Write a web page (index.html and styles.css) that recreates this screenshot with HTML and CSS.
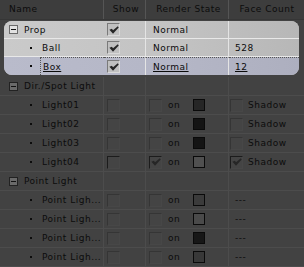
FILE: index.html
```html
<!DOCTYPE html>
<html>
<head>
<meta charset="utf-8">
<link rel="stylesheet" href="styles.css">
</head>
<body>
<div class="tree">
  <div class="row head">
    <div class="c name">Name</div>
    <div class="c show ctr">Show</div>
    <div class="c rs ctr">Render State</div>
    <div class="c fc ctr">Face Count</div>
  </div>

  <div class="sel">
    <div class="row srow">
      <div class="c name grp"><span class="tog"></span><span>Prop</span></div>
      <div class="c show"><span class="cb on"><svg viewBox="0 0 11 9"><path d="M0.3 4.2 L3.2 3 L4.4 4.8 L9.8 0.2 L10.8 1.8 L4.4 8.8 Z"/></svg></span></div>
      <div class="c rs"><span class="txt">Normal</span></div>
      <div class="c fc"></div>
    </div>
    <div class="row srow">
      <div class="c name kid"><span class="dot"></span><span>Ball</span></div>
      <div class="c show"><span class="cb on"><svg viewBox="0 0 11 9"><path d="M0.3 4.2 L3.2 3 L4.4 4.8 L9.8 0.2 L10.8 1.8 L4.4 8.8 Z"/></svg></span></div>
      <div class="c rs"><span class="txt">Normal</span></div>
      <div class="c fc"><span class="txt">528</span></div>
    </div>
    <div class="row srow box">
      <div class="c name kid"><span class="dot"></span><span class="focus u">Box</span></div>
      <div class="c show"><span class="cb on"><svg viewBox="0 0 11 9"><path d="M0.3 4.2 L3.2 3 L4.4 4.8 L9.8 0.2 L10.8 1.8 L4.4 8.8 Z"/></svg></span></div>
      <div class="c rs"><span class="txt u">Normal</span></div>
      <div class="c fc"><span class="txt u">12</span></div>
    </div>
  </div>

  <div class="row">
    <div class="c name grp"><span class="tog"></span><span>Dir./Spot Light</span></div>
    <div class="c show"></div><div class="c rs"></div><div class="c fc"></div>
  </div>
  <div class="row">
    <div class="c name kid"><span class="dot"></span><span>Light01</span></div>
    <div class="c show"><span class="cb"></span></div>
    <div class="c rs"><span class="cb"></span><span class="on-t">on</span><span class="sw" style="background:#262626"></span></div>
    <div class="c fc"><span class="cb"></span><span class="sh">Shadow</span></div>
  </div>
  <div class="row">
    <div class="c name kid"><span class="dot"></span><span>Light02</span></div>
    <div class="c show"><span class="cb"></span></div>
    <div class="c rs"><span class="cb"></span><span class="on-t">on</span><span class="sw" style="background:#141414"></span></div>
    <div class="c fc"><span class="cb"></span><span class="sh">Shadow</span></div>
  </div>
  <div class="row">
    <div class="c name kid"><span class="dot"></span><span>Light03</span></div>
    <div class="c show"><span class="cb"></span></div>
    <div class="c rs"><span class="cb"></span><span class="on-t">on</span><span class="sw" style="background:#141414"></span></div>
    <div class="c fc"><span class="cb"></span><span class="sh">Shadow</span></div>
  </div>
  <div class="row">
    <div class="c name kid"><span class="dot"></span><span>Light04</span></div>
    <div class="c show"><span class="cb dark"></span></div>
    <div class="c rs"><span class="cb on dark"><svg viewBox="0 0 11 9"><path d="M0.3 4.2 L3.2 3 L4.4 4.8 L9.8 0.2 L10.8 1.8 L4.4 8.8 Z"/></svg></span><span class="on-t">on</span><span class="sw" style="background:#505050"></span></div>
    <div class="c fc"><span class="cb on dark"><svg viewBox="0 0 11 9"><path d="M0.3 4.2 L3.2 3 L4.4 4.8 L9.8 0.2 L10.8 1.8 L4.4 8.8 Z"/></svg></span><span class="sh">Shadow</span></div>
  </div>

  <div class="row">
    <div class="c name grp"><span class="tog"></span><span>Point Light</span></div>
    <div class="c show"></div><div class="c rs"></div><div class="c fc"></div>
  </div>
  <div class="row">
    <div class="c name kid"><span class="dot"></span><span>Point Ligh...</span></div>
    <div class="c show"><span class="cb"></span></div>
    <div class="c rs"><span class="cb"></span><span class="on-t">on</span><span class="sw" style="background:#3b3b3b"></span></div>
    <div class="c fc"><span class="txt">---</span></div>
  </div>
  <div class="row">
    <div class="c name kid"><span class="dot"></span><span>Point Ligh...</span></div>
    <div class="c show"><span class="cb"></span></div>
    <div class="c rs"><span class="cb"></span><span class="on-t">on</span><span class="sw" style="background:#4a4a4a"></span></div>
    <div class="c fc"><span class="txt">---</span></div>
  </div>
  <div class="row">
    <div class="c name kid"><span class="dot"></span><span>Point Ligh...</span></div>
    <div class="c show"><span class="cb"></span></div>
    <div class="c rs"><span class="cb"></span><span class="on-t">on</span><span class="sw" style="background:#171717"></span></div>
    <div class="c fc"><span class="txt">---</span></div>
  </div>
  <div class="row">
    <div class="c name kid"><span class="dot"></span><span>Point Ligh...</span></div>
    <div class="c show"><span class="cb"></span></div>
    <div class="c rs"><span class="cb"></span><span class="on-t">on</span><span class="sw" style="background:#383838"></span></div>
    <div class="c fc"><span class="txt">---</span></div>
  </div>
</div>
</body>
</html>
```

FILE: styles.css
```css
html, body {
  margin: 0;
  padding: 0;
  background: #424242;
}
.tree {
  width: 304px;
  height: 267px;
  overflow: hidden;
  font-family: "DejaVu Sans", sans-serif;
  font-size: 9px;
  letter-spacing: 0.5px;
  color: #0c0c0c;
  background: #424242;
}
.row {
  display: grid;
  grid-template-columns: 104px 42px 83px 75px;
  height: 19px;
  box-sizing: border-box;
  border-bottom: 1px solid #4c4c4c;
}
.c {
  display: flex;
  align-items: center;
  box-sizing: border-box;
  border-right: 1px solid #4c4c4c;
  white-space: nowrap;
  overflow: hidden;
}
.c.fc { border-right: none; }
.head {
  height: 20px;
  background: #3d3d3d;
  border-bottom: 1px solid #363636;
}
.head .c { border-right: 1px solid #555; padding-bottom: 1px; }
.head .c.fc { border-right: none; }
.head .name { padding-left: 9px; }
.ctr { justify-content: center; }

/* name column */
.grp { padding-left: 9px; gap: 6px; }
.kid { padding-left: 30px; gap: 10px; }
.tog {
  width: 9px;
  height: 9px;
  box-sizing: border-box;
  border: 1px solid #222;
  background: #6a6a6a;
  position: relative;
  flex: none;
}
.tog::after {
  content: "";
  position: absolute;
  left: 1px;
  right: 1px;
  top: 3px;
  height: 1px;
  background: #111;
}
.dot {
  width: 2px;
  height: 2px;
  background: #0c0c0c;
  flex: none;
}

/* show & render cells */
.show { padding-left: 3px; }
.rs { padding-left: 3px; }
.fc { padding-left: 1px; }
.txt { margin-left: 4px; }
.rs .txt { margin-left: 4px; }
.fc .txt { margin-left: 5px; }
.cb {
  width: 13px;
  height: 13px;
  box-sizing: border-box;
  border-top: 1px solid #353535;
  border-left: 1px solid #353535;
  border-right: 1px solid #474747;
  border-bottom: 1px solid #474747;
  background: #444;
  flex: none;
  display: flex;
  align-items: center;
  justify-content: center;
}
.cb.dark {
  border-top-color: #1c1c1c;
  border-left-color: #1c1c1c;
}
.cb svg { width: 10px; height: 8px; fill: #262626; }
.on-t { margin-left: 6px; }
.sw {
  width: 12px;
  height: 12px;
  box-sizing: border-box;
  border: 1px solid #0a0a0a;
  margin-left: 13px;
  flex: none;
}
.sh { margin-left: 5px; }

/* selection group */
.sel {
  margin: 1px 5px 2px 4px;
  border-radius: 8px;
  overflow: hidden;
  background: #c4c4c4;
}
.srow {
  grid-template-columns: 100px 42px 83px 70px;
  height: 18px;
  border-bottom: 1px solid #e8e8e8;
  background: linear-gradient(to right, #cacaca, #c2c2c2 60%, #b7b7b7);
}
.srow.box {
  border-bottom: none;
  height: 18px;
  background: linear-gradient(to right, #b9bbcb, #b4b6c6 60%, #adafbf);
}
.srow .c { border-right: 1px solid #e4e4e4; }
.srow .c.name { border-right: none; }
.srow .c.fc { border-right: none; }
.srow .grp { padding-left: 5px; }
.srow .kid { padding-left: 26px; }
.srow .tog {
  background: #e2e2e2;
  border-color: #6a6a6a;
}
.srow .cb {
  background: #c0c0c0;
  border-top-color: #7a7a7a;
  border-left-color: #7a7a7a;
  border-right-color: #d8d8d8;
  border-bottom-color: #d8d8d8;
}
.u { text-decoration: underline; }
.focus {
  align-self: stretch;
  display: flex;
  align-items: center;
  padding-left: 2px;
  margin-left: -2px;
  flex: 1;
  border-left: 1px dotted #555;
  border-top: 1px dotted #555;
}
.srow.box .c.show, .srow.box .c.rs, .srow.box .c.fc {
  border-top: 1px dotted #555;
}
```
